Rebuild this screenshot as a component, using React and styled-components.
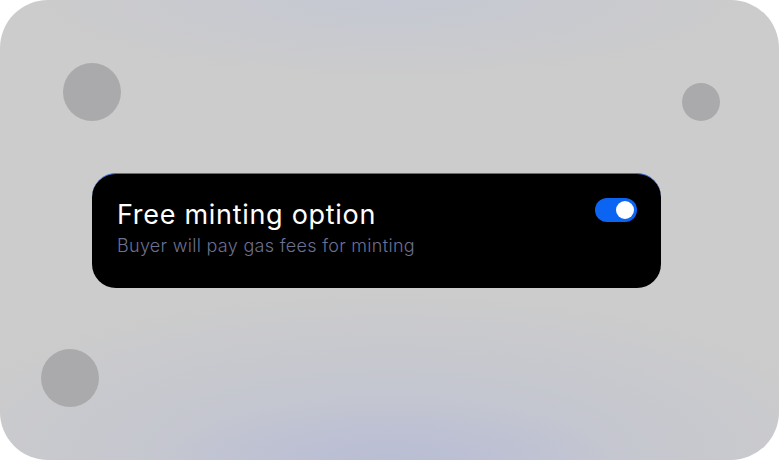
import React, { useState } from "react";
import styled, { createGlobalStyle } from "styled-components";

const GlobalStyle = createGlobalStyle`
  html, body {
    margin: 0;
    padding: 0;
    background: #ffffff;
  }
  body {
    font-family: Inter, "Noto Sans", sans-serif;
  }
`;

const Stage = styled.div`
  position: relative;
  width: 779px;
  height: 460px;
  border-radius: 48px;
  overflow: hidden;
  background:
    radial-gradient(ellipse 240px 60px at 50% 100%, #babed4 0%, rgba(186, 190, 212, 0) 100%),
    radial-gradient(ellipse 480px 170px at 50% 100%, rgba(188, 192, 212, 0.85) 0%, rgba(200, 202, 212, 0) 100%),
    radial-gradient(ellipse 380px 80px at 50% 0%, rgba(196, 199, 212, 0.8) 0%, rgba(204, 204, 206, 0) 100%),
    #cccccc;
  display: flex;
  align-items: center;
  padding-left: 92px;
  box-sizing: border-box;
`;

const Dot = styled.span`
  position: absolute;
  left: ${(p) => p.x - p.r}px;
  top: ${(p) => p.y - p.r}px;
  width: ${(p) => p.r * 2}px;
  height: ${(p) => p.r * 2}px;
  border-radius: 50%;
  background: #aaaaac;
`;

const Card = styled.div`
  position: relative;
  width: 569px;
  height: 115px;
  box-sizing: border-box;
  background: #000000;
  border-radius: 24px;
  border-top: 1px solid #3e6fdc;
  padding: 26px 24px 0 25px;
  display: flex;
  justify-content: space-between;
  align-items: flex-start;
`;

const Texts = styled.div`
  display: flex;
  flex-direction: column;
`;

const Title = styled.div`
  color: #ffffff;
  font-size: 27px;
  line-height: 30px;
  font-weight: 400;
  letter-spacing: 0.7px;
`;

const Subtitle = styled.div`
  color: #6b7190;
  font-size: 18px;
  line-height: 22px;
  font-weight: 300;
  letter-spacing: 0.3px;
  margin-top: 5px;
`;

const Switch = styled.button`
  width: 42px;
  height: 24px;
  margin-top: -2px;
  border: 0;
  padding: 3px;
  border-radius: 12px;
  background: ${(p) => (p.on ? "#0c64f2" : "#3a3d48")};
  display: flex;
  justify-content: ${(p) => (p.on ? "flex-end" : "flex-start")};
  align-items: center;
  cursor: pointer;
`;

const Knob = styled.span`
  width: 18px;
  height: 18px;
  border-radius: 50%;
  background: #ffffff;
`;

export default function App() {
  const [on, setOn] = useState(true);

  return (
    <>
      <GlobalStyle />
      <Stage>
        <Dot x={92} y={92} r={29} />
        <Dot x={701} y={102} r={19} />
        <Dot x={69.5} y={378} r={29} />
        <Card>
          <Texts>
            <Title>Free minting option</Title>
            <Subtitle>Buyer will pay gas fees for minting</Subtitle>
          </Texts>
          <Switch on={on ? 1 : 0} onClick={() => setOn(!on)} aria-label="toggle">
            <Knob />
          </Switch>
        </Card>
      </Stage>
    </>
  );
}
